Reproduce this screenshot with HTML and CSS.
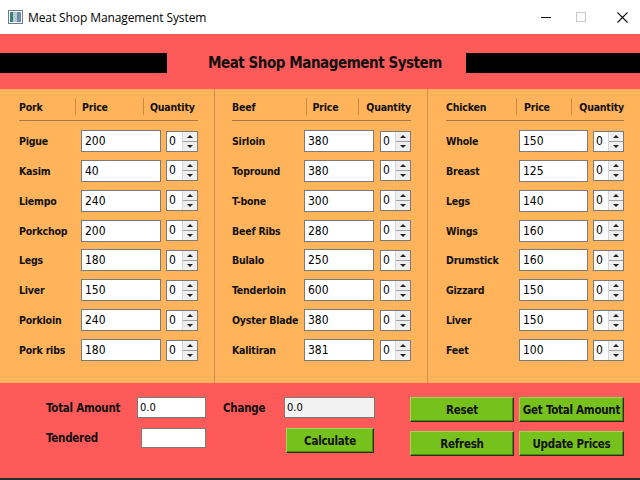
FILE: index.html
```html
<!DOCTYPE html>
<html>
<head>
<meta charset="utf-8">
<link rel="stylesheet" href="styles.css">
</head>
<body>
<div class="window">
  <div class="titlebar">
    <svg class="appicon" width="15" height="14" viewBox="0 0 15 14">
      <rect x="0.5" y="0.5" width="14" height="13" fill="#fff" stroke="#6b7b8c"/>
      <rect x="2" y="2" width="3" height="10" fill="#3d7f7a"/>
      <rect x="5" y="2" width="4" height="10" fill="#b7c9d6"/>
      <rect x="9" y="2" width="4" height="10" fill="#6d8aa6"/>
    </svg>
    <span class="wintitle">Meat Shop Management System</span>
    <div class="controls">
      <span class="ctl min"></span>
      <span class="ctl max"></span>
      <svg class="ctl close" width="11" height="11" viewBox="0 0 11 11"><path d="M0.5 0.5 L10.5 10.5 M10.5 0.5 L0.5 10.5" stroke="#111" stroke-width="1.1"/></svg>
    </div>
  </div>

  <div class="header">
    <div class="bar bar-left"></div>
    <h1 class="heading">Meat Shop Management System</h1>
    <div class="bar bar-right"></div>
  </div>

  <div class="main">
    <section class="col pork">
      <div class="colhead">
        <span class="h-name">Pork</span><span class="tick"></span><span class="h-price">Price</span><span class="tick"></span><span class="h-qty">Quantity</span>
      </div>
      <div class="rule"></div>
      <div class="rows">
        <span class="lbl">Pigue</span><div class="entry">200</div><div class="spin"><span class="sv">0</span><span class="arrows"><span class="up"></span><span class="dn"></span></span></div>
        <span class="lbl">Kasim</span><div class="entry">40</div><div class="spin"><span class="sv">0</span><span class="arrows"><span class="up"></span><span class="dn"></span></span></div>
        <span class="lbl">Liempo</span><div class="entry">240</div><div class="spin"><span class="sv">0</span><span class="arrows"><span class="up"></span><span class="dn"></span></span></div>
        <span class="lbl">Porkchop</span><div class="entry">200</div><div class="spin"><span class="sv">0</span><span class="arrows"><span class="up"></span><span class="dn"></span></span></div>
        <span class="lbl">Legs</span><div class="entry">180</div><div class="spin"><span class="sv">0</span><span class="arrows"><span class="up"></span><span class="dn"></span></span></div>
        <span class="lbl">Liver</span><div class="entry">150</div><div class="spin"><span class="sv">0</span><span class="arrows"><span class="up"></span><span class="dn"></span></span></div>
        <span class="lbl">Porkloin</span><div class="entry">240</div><div class="spin"><span class="sv">0</span><span class="arrows"><span class="up"></span><span class="dn"></span></span></div>
        <span class="lbl">Pork ribs</span><div class="entry">180</div><div class="spin"><span class="sv">0</span><span class="arrows"><span class="up"></span><span class="dn"></span></span></div>
      </div>
    </section>

    <section class="col beef">
      <div class="colhead">
        <span class="h-name">Beef</span><span class="tick"></span><span class="h-price">Price</span><span class="tick"></span><span class="h-qty">Quantity</span>
      </div>
      <div class="rule"></div>
      <div class="rows">
        <span class="lbl">Sirloin</span><div class="entry">380</div><div class="spin"><span class="sv">0</span><span class="arrows"><span class="up"></span><span class="dn"></span></span></div>
        <span class="lbl">Topround</span><div class="entry">380</div><div class="spin"><span class="sv">0</span><span class="arrows"><span class="up"></span><span class="dn"></span></span></div>
        <span class="lbl">T-bone</span><div class="entry">300</div><div class="spin"><span class="sv">0</span><span class="arrows"><span class="up"></span><span class="dn"></span></span></div>
        <span class="lbl">Beef Ribs</span><div class="entry">280</div><div class="spin"><span class="sv">0</span><span class="arrows"><span class="up"></span><span class="dn"></span></span></div>
        <span class="lbl">Bulalo</span><div class="entry">250</div><div class="spin"><span class="sv">0</span><span class="arrows"><span class="up"></span><span class="dn"></span></span></div>
        <span class="lbl">Tenderloin</span><div class="entry">600</div><div class="spin"><span class="sv">0</span><span class="arrows"><span class="up"></span><span class="dn"></span></span></div>
        <span class="lbl">Oyster Blade</span><div class="entry">380</div><div class="spin"><span class="sv">0</span><span class="arrows"><span class="up"></span><span class="dn"></span></span></div>
        <span class="lbl">Kalitiran</span><div class="entry">381</div><div class="spin"><span class="sv">0</span><span class="arrows"><span class="up"></span><span class="dn"></span></span></div>
      </div>
    </section>

    <section class="col chicken">
      <div class="colhead">
        <span class="h-name">Chicken</span><span class="tick"></span><span class="h-price">Price</span><span class="tick"></span><span class="h-qty">Quantity</span>
      </div>
      <div class="rule"></div>
      <div class="rows">
        <span class="lbl">Whole</span><div class="entry">150</div><div class="spin"><span class="sv">0</span><span class="arrows"><span class="up"></span><span class="dn"></span></span></div>
        <span class="lbl">Breast</span><div class="entry">125</div><div class="spin"><span class="sv">0</span><span class="arrows"><span class="up"></span><span class="dn"></span></span></div>
        <span class="lbl">Legs</span><div class="entry">140</div><div class="spin"><span class="sv">0</span><span class="arrows"><span class="up"></span><span class="dn"></span></span></div>
        <span class="lbl">Wings</span><div class="entry">160</div><div class="spin"><span class="sv">0</span><span class="arrows"><span class="up"></span><span class="dn"></span></span></div>
        <span class="lbl">Drumstick</span><div class="entry">160</div><div class="spin"><span class="sv">0</span><span class="arrows"><span class="up"></span><span class="dn"></span></span></div>
        <span class="lbl">Gizzard</span><div class="entry">150</div><div class="spin"><span class="sv">0</span><span class="arrows"><span class="up"></span><span class="dn"></span></span></div>
        <span class="lbl">Liver</span><div class="entry">150</div><div class="spin"><span class="sv">0</span><span class="arrows"><span class="up"></span><span class="dn"></span></span></div>
        <span class="lbl">Feet</span><div class="entry">100</div><div class="spin"><span class="sv">0</span><span class="arrows"><span class="up"></span><span class="dn"></span></span></div>
      </div>
    </section>
  </div>

  <div class="footer">
    <div class="fgroup totals">
      <span class="flbl">Total Amount</span><div class="fentry total">0.0</div>
      <span class="flbl">Tendered</span><div class="fentry tendered"></div>
    </div>
    <div class="fgroup change">
      <span class="flbl">Change</span><div class="fentry readonly">0.0</div>
      <span></span><button class="btn calc">Calculate</button>
    </div>
    <div class="fgroup actions">
      <button class="btn">Reset</button>
      <button class="btn">Get Total Amount</button>
      <button class="btn">Refresh</button>
      <button class="btn">Update Prices</button>
    </div>
  </div>
</div>
</body>
</html>
```

FILE: styles.css
```css
* { box-sizing: border-box; }
html, body { margin: 0; padding: 0; }
body {
  width: 640px;
  height: 480px;
  overflow: hidden;
  background: #fff;
  font-family: "DejaVu Sans Condensed", "DejaVu Sans", sans-serif;
}
.window {
  width: 640px;
  height: 480px;
  display: flex;
  flex-direction: column;
  border-bottom: 2px solid #2b2b2b;
}

/* title bar */
.titlebar {
  height: 34px;
  flex: none;
  display: flex;
  align-items: center;
  padding-left: 8px;
  background: #fff;
}
.appicon { display: block; margin-top: -1px; }
.wintitle {
  margin-left: 5px;
  font-family: "Open Sans", "Noto Sans", sans-serif;
  font-size: 12px;
  color: #000;
  letter-spacing: -0.1px;
}
.controls {
  margin-left: auto;
  display: flex;
  align-items: center;
  height: 100%;
}
.ctl { display: block; }
.min { width: 10px; height: 1px; background: #111; margin-right: 25px; }
.max { width: 10px; height: 10px; border: 1px solid #c8c8c8; margin-right: 31px; }
.close { margin-right: 12px; }

/* header */
.header {
  height: 55px;
  flex: none;
  background: #ff5a5a;
  display: flex;
  align-items: center;
}
.bar { height: 20px; background: #000; flex: none; margin-top: 2px; }
.bar-left { width: 167px; }
.bar-right { width: 174px; margin-left: auto; }
.heading {
  margin: 2px 0 0 41px;
  font-size: 15px;
  font-weight: bold;
  color: #111;
  letter-spacing: -0.45px;
  white-space: nowrap;
}

/* main */
.main {
  height: 294px;
  flex: none;
  background: #ffb35a;
  display: grid;
  grid-template-columns: 214px 213px 213px;
}
.col {
  padding-top: 9px;
  padding-right: 16px;
}
.col + .col { border-left: 1px solid #cf8f48; }
.pork { padding-left: 19px; --nw: 56px; --pw: 61px; --pm: 6px; --qm: 6px; --lw: 57px; --ew: 80px; --g: 5px; --sw: 32px; }
.beef { padding-left: 17px; --nw: 74px; --pw: 46px; --pm: 6px; --qm: 7px; --lw: 66px; --ew: 70px; --g: 6px; --sw: 31px; }
.chicken { padding-left: 18px; --nw: 71px; --pw: 48px; --pm: 7px; --qm: 7px; --lw: 68px; --ew: 69px; --g: 5px; --sw: 31px; }

.colhead {
  height: 17px;
  display: flex;
  align-items: center;
  font-size: 10.5px;
  font-weight: bold;
  letter-spacing: -0.2px;
  color: #111;
}
.h-name { width: var(--nw); }
.h-price { width: var(--pw); margin-left: var(--pm); }
.h-qty { margin-left: var(--qm); white-space: nowrap; }
.tick { width: 1px; height: 17px; background: #c98a46; flex: none; }
.rule {
  height: 1px;
  background: #a57a4e;
  margin-top: 5px;
  margin-bottom: 9px;
}
.rows {
  display: grid;
  grid-template-columns: var(--lw) var(--ew) var(--sw);
  column-gap: var(--g);
  grid-auto-rows: 22px;
  row-gap: 7.86px;
  align-items: center;
}
.lbl {
  font-size: 10.5px;
  font-weight: bold;
  letter-spacing: -0.2px;
  color: #111;
  white-space: nowrap;
}
.entry {
  height: 22px;
  background: #fff;
  border: 1px solid #7a7a7a;
  font-size: 12px;
  line-height: 20px;
  padding-left: 3px;
  color: #000;
}
.spin {
  height: 21px;
  background: #fff;
  border: 1px solid #7a7a7a;
  display: flex;
}
.sv {
  flex: 1;
  font-size: 12px;
  line-height: 19px;
  padding-left: 2px;
  color: #000;
}
.arrows {
  width: 15px;
  display: flex;
  flex-direction: column;
  border-left: 1px solid #d6d6d6;
  background: #efefef;
}
.up, .dn {
  flex: 1;
  position: relative;
}
.up { border-bottom: 1px solid #a0a0a0; }
.up::after, .dn::after {
  content: "";
  position: absolute;
  left: 4px;
  border-left: 3px solid transparent;
  border-right: 3px solid transparent;
}
.up::after { top: 3px; border-bottom: 3px solid #222; }
.dn::after { top: 3px; border-top: 3px solid #222; }

/* footer */
.footer {
  flex: 1;
  background: #ff5a5a;
  display: flex;
  align-items: flex-start;
  padding-top: 14px;
  padding-left: 46px;
}
.fgroup { display: grid; }
.totals {
  grid-template-columns: 91px 69px;
  grid-template-rows: 21px 20px;
  row-gap: 10px;
  align-items: center;
}
.change {
  margin-left: 17px;
  grid-template-columns: 61px 91px;
  grid-template-rows: 21px 25px;
  row-gap: 10px;
  align-items: center;
}
.actions {
  margin-left: 35px;
  grid-template-columns: 104px 105px;
  grid-template-rows: 25px 25px;
  column-gap: 5px;
  row-gap: 9px;
}
.flbl {
  font-size: 11.5px;
  font-weight: bold;
  letter-spacing: -0.25px;
  color: #111;
  white-space: nowrap;
}
.fentry {
  height: 21px;
  background: #fff;
  border: 1px solid #7a7a7a;
  font-size: 11px;
  line-height: 19px;
  padding-left: 2px;
  color: #000;
}
.tendered { width: 65px; height: 20px; justify-self: end; }
.readonly { background: #f2f2f2; }
.btn {
  font-family: "DejaVu Sans Condensed", "DejaVu Sans", sans-serif;
  font-size: 11.5px;
  font-weight: bold;
  letter-spacing: -0.25px;
  color: #111;
  background: #76c11c;
  border: 1px solid;
  border-color: #9ad65a #213605 #213605 #9ad65a;
  box-shadow: inset -1px -1px 0 #4f8412;
  padding: 0;
  height: 25px;
  white-space: nowrap;
}
.calc { width: 88px; margin-left: 2px; }
```
